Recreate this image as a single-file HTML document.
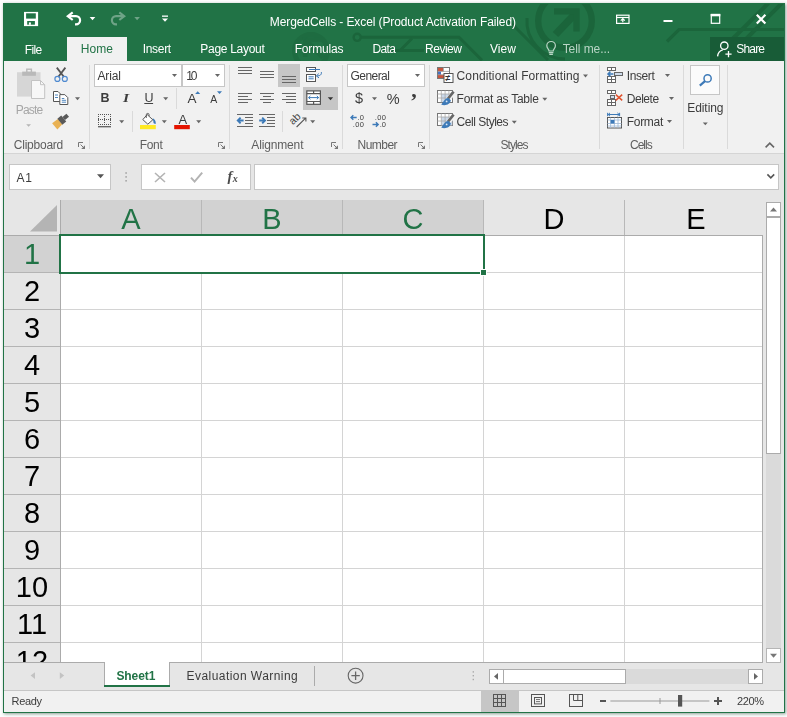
<!DOCTYPE html>
<html><head><meta charset="utf-8"><title>MergedCells - Excel</title>
<style>
html,body{margin:0;padding:0;}
body{width:787px;height:717px;overflow:hidden;background:#fdfdfd;position:relative;font-family:"Liberation Sans",sans-serif;}
#w div{position:absolute;}
#w .t{white-space:nowrap;}
svg{position:absolute;left:0;top:0;}
</style></head><body><div id="w">
<div style="left:3px;top:3px;width:782px;height:710px;background:#e6e6e6;box-shadow:1px 1px 3px rgba(30,70,50,.5);"></div>
<div style="left:3px;top:3px;width:782px;height:58px;background:#217346;"></div>
<svg width="787" height="717" viewBox="0 0 787 717"><defs><clipPath id="tb"><rect x="4" y="4" width="780" height="57"/></clipPath></defs><g clip-path="url(#tb)" fill="none" stroke="#1b653b" stroke-width="3"><circle cx="565" cy="21" r="26.8" stroke-width="6.3"/><path d="M555.5 34.5L575 14" stroke-width="7.5"/><path d="M554 11.4H576.5V31.5" stroke-width="6.3"/><path d="M527 18a38 38 0 0 0 38 41" stroke-width="3"/><path d="M508 20L548 60" stroke-width="3"/><path d="M787 29.5H679L667 41.5" stroke-width="3.2"/><path d="M768.5 3L733 38.5" stroke-width="4"/><path d="M782 3L746.5 38.5" stroke-width="4"/><g stroke="#1e6c41"><circle cx="311" cy="51" r="16.5" stroke-width="5"/><path d="M303 39.5H322M305.2 37.5V57" stroke-width="4.5"/><path d="M305 39.5L323 57.5" stroke-width="5"/></g><path d="M361 37.3H459L482 60.3" stroke-width="3"/><path d="M412 38.5L400 50.5M385 50.5H424" stroke-width="3"/><circle cx="357.2" cy="37.3" r="3.6" stroke-width="2.4"/></g></svg>
<div style="left:67px;top:37px;width:60px;height:24px;background:#f1f1f1;"></div>
<div style="left:710px;top:37px;width:75px;height:24px;background:#185c37;"></div>
<div style="left:4px;top:61px;width:780px;height:92px;background:#f1f1f1;"></div>
<div style="left:4px;top:153px;width:780px;height:1px;background:#d5d5d5;"></div>
<div style="left:89px;top:65px;width:1px;height:84px;background:#dadada;"></div>
<div style="left:229px;top:65px;width:1px;height:84px;background:#dadada;"></div>
<div style="left:342px;top:65px;width:1px;height:84px;background:#dadada;"></div>
<div style="left:429px;top:65px;width:1px;height:84px;background:#dadada;"></div>
<div style="left:599px;top:65px;width:1px;height:84px;background:#dadada;"></div>
<div style="left:683px;top:65px;width:1px;height:84px;background:#dadada;"></div>
<div style="left:727px;top:65px;width:1px;height:84px;background:#dadada;"></div>
<div style="left:176px;top:88px;width:1px;height:21px;background:#dadada;"></div>
<div style="left:132px;top:111px;width:1px;height:21px;background:#dadada;"></div>
<div style="left:282px;top:111px;width:1px;height:21px;background:#dadada;"></div>
<div style="left:94px;top:64px;width:88px;height:23px;background:#fff;border:1px solid #c6c6c6;box-sizing:border-box;"></div>
<div style="left:182px;top:64px;width:43px;height:23px;background:#fff;border:1px solid #c6c6c6;box-sizing:border-box;"></div>
<div style="left:347px;top:64px;width:78px;height:23px;background:#fff;border:1px solid #c6c6c6;box-sizing:border-box;"></div>
<div style="left:278px;top:64px;width:22px;height:23px;background:#c6c6c6;"></div>
<div style="left:303px;top:87px;width:35px;height:23px;background:#c6c6c6;"></div>
<div style="left:690px;top:65px;width:30px;height:30px;background:#fbfbfb;border:1px solid #c6c6c6;box-sizing:border-box;"></div>
<div style="left:9px;top:164px;width:102px;height:26px;background:#fff;border:1px solid #c6c6c6;box-sizing:border-box;"></div>
<div style="left:141px;top:164px;width:110px;height:26px;background:#fff;border:1px solid #c6c6c6;box-sizing:border-box;"></div>
<div style="left:254px;top:164px;width:525px;height:26px;background:#fff;border:1px solid #c6c6c6;box-sizing:border-box;"></div>
<div style="left:61px;top:236px;width:701px;height:426px;background:#fff;"></div>
<div style="left:61px;top:200px;width:423px;height:35px;background:#d2d2d2;"></div>
<div style="left:4px;top:236px;width:56px;height:37px;background:#d2d2d2;"></div>
<div style="left:201px;top:200px;width:1px;height:35px;background:#b8b8b8;"></div>
<div style="left:342px;top:200px;width:1px;height:35px;background:#b8b8b8;"></div>
<div style="left:483px;top:200px;width:1px;height:35px;background:#b8b8b8;"></div>
<div style="left:624px;top:200px;width:1px;height:35px;background:#b8b8b8;"></div>
<div style="left:4px;top:235px;width:759px;height:1px;background:#ababab;"></div>
<div style="left:60px;top:200px;width:1px;height:462px;background:#ababab;"></div>
<div style="left:201px;top:236px;width:1px;height:426px;background:#d4d4d4;"></div>
<div style="left:342px;top:236px;width:1px;height:426px;background:#d4d4d4;"></div>
<div style="left:483px;top:236px;width:1px;height:426px;background:#d4d4d4;"></div>
<div style="left:624px;top:236px;width:1px;height:426px;background:#d4d4d4;"></div>
<div style="left:4px;top:272px;width:56px;height:1px;background:#b4b4b4;"></div>
<div style="left:61px;top:272px;width:701px;height:1px;background:#d4d4d4;"></div>
<div style="left:4px;top:309px;width:56px;height:1px;background:#b4b4b4;"></div>
<div style="left:61px;top:309px;width:701px;height:1px;background:#d4d4d4;"></div>
<div style="left:4px;top:346px;width:56px;height:1px;background:#b4b4b4;"></div>
<div style="left:61px;top:346px;width:701px;height:1px;background:#d4d4d4;"></div>
<div style="left:4px;top:383px;width:56px;height:1px;background:#b4b4b4;"></div>
<div style="left:61px;top:383px;width:701px;height:1px;background:#d4d4d4;"></div>
<div style="left:4px;top:420px;width:56px;height:1px;background:#b4b4b4;"></div>
<div style="left:61px;top:420px;width:701px;height:1px;background:#d4d4d4;"></div>
<div style="left:4px;top:457px;width:56px;height:1px;background:#b4b4b4;"></div>
<div style="left:61px;top:457px;width:701px;height:1px;background:#d4d4d4;"></div>
<div style="left:4px;top:494px;width:56px;height:1px;background:#b4b4b4;"></div>
<div style="left:61px;top:494px;width:701px;height:1px;background:#d4d4d4;"></div>
<div style="left:4px;top:531px;width:56px;height:1px;background:#b4b4b4;"></div>
<div style="left:61px;top:531px;width:701px;height:1px;background:#d4d4d4;"></div>
<div style="left:4px;top:568px;width:56px;height:1px;background:#b4b4b4;"></div>
<div style="left:61px;top:568px;width:701px;height:1px;background:#d4d4d4;"></div>
<div style="left:4px;top:605px;width:56px;height:1px;background:#b4b4b4;"></div>
<div style="left:61px;top:605px;width:701px;height:1px;background:#d4d4d4;"></div>
<div style="left:4px;top:642px;width:56px;height:1px;background:#b4b4b4;"></div>
<div style="left:61px;top:642px;width:701px;height:1px;background:#d4d4d4;"></div>
<div style="left:762px;top:235px;width:1px;height:428px;background:#ababab;"></div>
<div style="left:4px;top:662px;width:759px;height:1px;background:#ababab;"></div>
<div style="left:61px;top:234px;width:423px;height:2px;background:#217346;"></div>
<div style="left:59px;top:236px;width:2px;height:37px;background:#217346;"></div>
<div style="left:59px;top:234px;width:426px;height:40px;border:2px solid #217346;box-sizing:border-box;"></div>
<div style="left:61px;top:236px;width:422px;height:36px;background:#fff;"></div>
<div style="left:480px;top:269px;width:7px;height:7px;background:#fff;"></div>
<div style="left:481px;top:270px;width:5px;height:5px;background:#217346;"></div>
<div style="left:766px;top:202px;width:15px;height:461px;background:#dadada;"></div>
<div style="left:766px;top:202px;width:15px;height:15px;background:#fff;border:1px solid #ababab;box-sizing:border-box;"></div>
<div style="left:766px;top:217px;width:15px;height:237px;background:#fff;border:1px solid #ababab;box-sizing:border-box;"></div>
<div style="left:766px;top:648px;width:15px;height:15px;background:#fff;border:1px solid #b5b5b5;box-sizing:border-box;"></div>
<div style="left:489px;top:669px;width:274px;height:15px;background:#dadada;"></div>
<div style="left:489px;top:669px;width:15px;height:15px;background:#fff;border:1px solid #ababab;box-sizing:border-box;"></div>
<div style="left:503px;top:669px;width:123px;height:15px;background:#fff;border:1px solid #ababab;box-sizing:border-box;"></div>
<div style="left:748px;top:669px;width:15px;height:15px;background:#fff;border:1px solid #ababab;box-sizing:border-box;"></div>
<div style="left:104px;top:662px;width:66px;height:25px;background:#fff;"></div>
<div style="left:104px;top:685px;width:66px;height:2px;background:#217346;"></div>
<div style="left:104px;top:662px;width:1px;height:23px;background:#ababab;"></div>
<div style="left:169px;top:662px;width:1px;height:23px;background:#ababab;"></div>
<div style="left:314px;top:666px;width:1px;height:20px;background:#ababab;"></div>
<div style="left:4px;top:690px;width:780px;height:1px;background:#c6c6c6;"></div>
<div style="left:4px;top:691px;width:780px;height:21px;background:#f1f1f1;"></div>
<div style="left:481px;top:691px;width:38px;height:21px;background:#c6c6c6;"></div>
<div style="left:3px;top:3px;width:782px;height:710px;border:1px solid #217346;box-sizing:border-box;"></div>
<svg width="787" height="717" viewBox="0 0 787 717">
<rect x="24" y="11.9" width="14.1" height="14.2" fill="#fff"/><rect x="26.1" y="13.3" width="9.7" height="5.3" fill="#217346"/><rect x="27.2" y="21" width="7.7" height="3.7" fill="#217346"/><rect x="28.9" y="22.4" width="2" height="2.4" fill="#fff"/>
<g fill="none" stroke="#fff" stroke-width="2.2"><path d="M72.7 12.4L67.8 16.2l4.9 3.8"/><path d="M68.6 16.2H76a4.1 4.1 0 0 1 0 8.2h-1"/></g>
<path d="M89.7 17h5.6l-2.8 3.3z" fill="#fff"/>
<g fill="none" stroke="#6fa387" stroke-width="2.2"><path d="M119.3 12.4l4.9 3.8-4.9 3.8"/><path d="M123.4 16.2H116a4.1 4.1 0 0 0 0 8.2h1"/></g>
<path d="M134.3 17h5.6l-2.8 3.3z" fill="#6fa387"/>
<rect x="162" y="15.5" width="6" height="1.3" fill="#fff"/>
<path d="M162 18.6h6l-3.0 3.2z" fill="#fff"/>
<g fill="none" stroke="#fff" stroke-width="1.2"><rect x="616.6" y="15.2" width="12.4" height="8.2"/><path d="M616.6 17.5h12.4"/><path d="M622.8 22.3v-3.6M620.8 20.6l2-2 2 2"/></g>
<rect x="663.5" y="20" width="9" height="2" fill="#fff"/>
<rect x="711.3" y="14.5" width="8.4" height="8.8" fill="none" stroke="#fff" stroke-width="1.2"/><rect x="710.7" y="13.9" width="9.6" height="2.4" fill="#fff"/>
<path d="M756.8 14.8l8.6 8.8M765.4 14.8l-8.6 8.8" stroke="#fff" stroke-width="2.2" fill="none"/>
<g fill="none" stroke="#b9d5c5" stroke-width="1.2"><path d="M549 51c0-1.8-2.2-2.6-2.2-5.2a4.3 4.3 0 0 1 8.6 0c0 2.6-2.2 3.4-2.2 5.2z"/><path d="M548.8 52.6h4.6M549.3 54.4h3.6"/></g>
<g fill="none" stroke="#fff" stroke-width="1.3"><circle cx="724.3" cy="45.7" r="3.7"/><path d="M717.6 56.4c.3-3.6 2.4-5.9 5.2-6.6"/><path d="M728.5 51v6.2M725.4 54.1h6.2"/></g>
<rect x="17" y="72.2" width="23.5" height="24.4" fill="#d6d6d6"/><rect x="22.2" y="71.6" width="13.7" height="4.2" fill="#b9b9b9"/><rect x="26.8" y="69.2" width="4.6" height="3.4" fill="none" stroke="#b9b9b9" stroke-width="1.4"/><path d="M31.5 80.5h9l4.2 4.2v13.8h-13.2z" fill="#f7f7f7" stroke="#c3c3c3" stroke-width="1"/><path d="M40.5 80.5v4.2h4.2" fill="none" stroke="#c3c3c3" stroke-width="1"/>
<path d="M26.2 124.2h4.8l-2.4 2.6z" fill="#b5b5b5"/>
<g fill="none"><path d="M56.8 67.6L64 77M65.4 67.6L58.2 77" stroke="#555" stroke-width="1.8"/><circle cx="57.4" cy="78.9" r="2.5" stroke="#4f8ad0" stroke-width="1.2"/><circle cx="64.8" cy="78.9" r="2.5" stroke="#4f8ad0" stroke-width="1.2"/></g>
<g fill="#fff" stroke="#555" stroke-width="1"><path d="M53.5 91.5h4.5l2.5 2.5v7.5h-7z"/><path d="M59.8 94.6h5l3 3v6.9h-8z"/></g><path d="M55 95h3M55 97.5h3M61.8 98.5h2.5M61.8 100.3h4.3M61.8 102.2h4.3" stroke="#3d7ab8" stroke-width="0.9" fill="none"/>
<path d="M75 97.2h5l-2.5 3z" fill="#666"/>
<g transform="translate(61.2 120.7) rotate(-40)"><path d="M-1.5 -3.4L-8.6 -3.9V4.3L-1.5 3.4z" fill="#e9b254"/><rect x="-1.7" y="-3.9" width="5" height="7.8" fill="#595959"/><rect x="3.3" y="-2" width="5.2" height="4" fill="#595959"/></g>
<path d="M78.5 147V142.5H83" fill="none" stroke="#777" stroke-width="1"/><path d="M80.6 144.6L84.2 148.2" stroke="#777" stroke-width="1"/><path d="M85 145.2V149H81.2z" fill="#777"/>
<path d="M218.5 147V142.5H223" fill="none" stroke="#777" stroke-width="1"/><path d="M220.6 144.6L224.2 148.2" stroke="#777" stroke-width="1"/><path d="M225 145.2V149H221.2z" fill="#777"/>
<path d="M331.5 147V142.5H336" fill="none" stroke="#777" stroke-width="1"/><path d="M333.6 144.6L337.2 148.2" stroke="#777" stroke-width="1"/><path d="M338 145.2V149H334.2z" fill="#777"/>
<path d="M418.5 147V142.5H423" fill="none" stroke="#777" stroke-width="1"/><path d="M420.6 144.6L424.2 148.2" stroke="#777" stroke-width="1"/><path d="M425 145.2V149H421.2z" fill="#777"/>
<path d="M172 74h5l-2.5 3z" fill="#666"/>
<path d="M215 74h5l-2.5 3z" fill="#666"/>
<rect x="144.3" y="103" width="8.8" height="1" fill="#444"/>
<path d="M163.2 97.2h5l-2.5 3z" fill="#666"/>
<path d="M195.2 94l2.5-2.8 2.5 2.8z" fill="#3d7ab8"/><path d="M217 91.3h5l-2.5 2.8z" fill="#3d7ab8"/>
<g stroke="#555" stroke-width="1" fill="none" stroke-dasharray="1 1"><path d="M98 114.5h13M98 119.5h13M98 124.5h13"/><path d="M98.5 114v11M104.5 114v11M110.5 114v11"/></g><rect x="98" y="126.2" width="13" height="1.1" fill="#444"/>
<path d="M119.2 120.2h5l-2.5 3z" fill="#666"/>
<rect x="140" y="125" width="15.8" height="4.2" fill="#ffe924"/><path d="M147.2 114.6l5.6 5.2-5 4.4-5-4.6z" fill="#fff" stroke="#555" stroke-width="1"/><path d="M146.3 118v-3.2a1.4 1.4 0 0 1 2.8 0v1.2" fill="none" stroke="#555" stroke-width="0.9"/><path d="M152.6 118.2c2 .8 3.4 2.6 3.2 5.6-1.6.4-2.6-.6-2.4-2.2z" fill="#3d7ab8"/>
<path d="M161.8 120.2h5l-2.5 3z" fill="#666"/>
<rect x="174.2" y="125" width="15.6" height="4.2" fill="#e51400"/>
<path d="M196.2 120.2h5l-2.5 3z" fill="#666"/>
<rect x="238" y="67" width="14" height="1" fill="#666"/>
<rect x="238" y="70" width="14" height="1" fill="#666"/>
<rect x="238" y="73" width="14" height="1" fill="#666"/>
<rect x="260" y="71" width="14" height="1" fill="#666"/>
<rect x="260" y="74" width="14" height="1" fill="#666"/>
<rect x="260" y="77" width="14" height="1" fill="#666"/>
<rect x="282" y="76" width="14" height="1" fill="#666"/>
<rect x="282" y="79" width="14" height="1" fill="#666"/>
<rect x="282" y="82" width="14" height="1" fill="#666"/>
<rect x="238" y="93" width="14" height="1" fill="#666"/>
<rect x="238" y="96" width="10" height="1" fill="#666"/>
<rect x="238" y="99" width="14" height="1" fill="#666"/>
<rect x="238" y="102" width="10" height="1" fill="#666"/>
<rect x="260" y="93" width="14" height="1" fill="#666"/>
<rect x="263" y="96" width="8" height="1" fill="#666"/>
<rect x="260" y="99" width="14" height="1" fill="#666"/>
<rect x="263" y="102" width="8" height="1" fill="#666"/>
<rect x="282" y="93" width="14" height="1" fill="#666"/>
<rect x="286" y="96" width="10" height="1" fill="#666"/>
<rect x="282" y="99" width="14" height="1" fill="#666"/>
<rect x="286" y="102" width="10" height="1" fill="#666"/>
<g fill="#fff" stroke="#555" stroke-width="1"><rect x="306.5" y="67.5" width="9" height="4"/><rect x="306.5" y="74.5" width="9" height="7"/></g><path d="M309 69.5h11M308.5 76.8h5.2M308.5 78.8h5.2" fill="none" stroke="#3d7ab8" stroke-width="1"/><path d="M321.3 72c.6 2.6-1.2 4-4.6 3.9M318.8 73.6l-2.4 2.3 2.6 2" fill="none" stroke="#3d7ab8" stroke-width="1"/>
<g fill="#fff" stroke="#555" stroke-width="1.2"><rect x="306.8" y="90.9" width="13.6" height="13.4"/><path d="M306.8 93.7h13.6M306.8 101.5h13.6M313.6 90.9v2.8M313.6 101.5v2.8" fill="none"/></g><path d="M308.6 97.6h10M310.4 95.9l-1.8 1.7 1.8 1.7M316.8 95.9l1.8 1.7-1.8 1.7" fill="none" stroke="#3d7ab8" stroke-width="1"/>
<path d="M327.8 97.2h5.4l-2.7 3z" fill="#333"/>
<rect x="237" y="114" width="16" height="1" fill="#666"/>
<rect x="237" y="126" width="16" height="1" fill="#666"/>
<rect x="245" y="117" width="8" height="1" fill="#666"/>
<rect x="245" y="120" width="8" height="1" fill="#666"/>
<rect x="245" y="123" width="8" height="1" fill="#666"/>
<path d="M243.6 120.5H238.2M240.6 117.7l-2.8 2.8 2.8 2.8" fill="none" stroke="#3d7ab8" stroke-width="1.9"/>
<rect x="259" y="114" width="16" height="1" fill="#666"/>
<rect x="259" y="126" width="16" height="1" fill="#666"/>
<rect x="267" y="117" width="8" height="1" fill="#666"/>
<rect x="267" y="120" width="8" height="1" fill="#666"/>
<rect x="267" y="123" width="8" height="1" fill="#666"/>
<path d="M259.2 120.5H264.6M262.2 117.7l2.8 2.8-2.8 2.8" fill="none" stroke="#3d7ab8" stroke-width="1.9"/>
<text x="0" y="0" transform="translate(293 125.3) rotate(-45)" font-family="Liberation Sans, sans-serif" font-size="10.5" fill="#444">ab</text><path d="M296.6 127l9-8.8M305.9 121.6v-3.6h-3.6" fill="none" stroke="#555" stroke-width="1.1"/>
<path d="M310.2 120.2h5l-2.5 3z" fill="#666"/>
<path d="M415 74h5l-2.5 3z" fill="#666"/>
<path d="M372 97.2h5l-2.5 3z" fill="#666"/>
<path d="M356.7 117.5H351.1M353.3 115.2l-2.3 2.3 2.3 2.3" fill="none" stroke="#3d7ab8" stroke-width="1.4"/>
<path d="M372.5 124.5H378.1M375.9 122.2l2.3 2.3-2.3 2.3" fill="none" stroke="#3d7ab8" stroke-width="1.4"/>
<g><rect x="437.5" y="67.5" width="12" height="11" fill="#fff" stroke="#777" stroke-width="1"/><rect x="438" y="68" width="5" height="3.4" fill="#c8553d"/><rect x="438" y="71.4" width="3" height="3.4" fill="#4472c4"/><rect x="438" y="74.8" width="6" height="3.2" fill="#c8553d"/><path d="M443.5 67.5v4M437.5 71.4h12M437.5 74.8h7" stroke="#999" stroke-width="0.8" fill="none"/><rect x="444" y="73.5" width="9" height="9" fill="#fff" stroke="#555" stroke-width="1"/><text x="445.3" y="81.2" font-family="Liberation Sans, sans-serif" font-size="9" font-weight="bold" fill="#333">≠</text></g>
<g><rect x="437.5" y="90.5" width="15" height="12" fill="#fff" stroke="#777" stroke-width="1"/><rect x="441.3" y="94" width="7.6" height="8" fill="#c9d8ea"/><path d="M437.5 94h15M437.5 98h15M441.3 90.5v12M445.1 90.5v12M448.9 90.5v12" stroke="#a8a8a8" stroke-width="0.8" fill="none"/><path d="M454.2 92.4l-6.6 7.4" stroke="#f1f1f1" stroke-width="4.6" fill="none"/><path d="M453.6 91.6l-5.6 7" stroke="#666" stroke-width="2.6" fill="none"/><path d="M448.8 98.2c-3.4-.8-4.4 2.6-7.6 6.4 4.4 1.6 9.2-.4 9.6-4.4z" fill="#3d7ab8"/><circle cx="446.6" cy="101.4" r="0.9" fill="#dce8f5"/></g>
<g><rect x="437.5" y="113.5" width="15" height="12" fill="#fff" stroke="#777" stroke-width="1"/><rect x="441.3" y="117" width="11" height="8.4" fill="#c9d8ea"/><path d="M437.5 117h15M437.5 121h15M441.3 113.5v12M445.1 113.5v12M448.9 113.5v12" stroke="#a8a8a8" stroke-width="0.8" fill="none"/><path d="M454.2 115.4l-6.6 7.4" stroke="#f1f1f1" stroke-width="4.6" fill="none"/><path d="M453.6 114.6l-5.6 7" stroke="#666" stroke-width="2.6" fill="none"/><path d="M448.8 121.2c-3.4-.8-4.4 2.6-7.6 6.4 4.4 1.6 9.2-.4 9.6-4.4z" fill="#3d7ab8"/><circle cx="446.6" cy="124.4" r="0.9" fill="#dce8f5"/></g>
<path d="M583 74.6h5l-2.5 3z" fill="#666"/>
<path d="M542.3 97.8h5l-2.5 3z" fill="#666"/>
<path d="M511.8 120.8h5l-2.5 3z" fill="#666"/>
<g fill="#fff" stroke="#666" stroke-width="1"><rect x="607.5" y="67.5" width="8" height="3"/><path d="M611.5 67.5v3" fill="none"/><rect x="614.5" y="72.5" width="8" height="3" fill="#cfdcec"/><rect x="607.5" y="76.5" width="8" height="6"/><path d="M611.5 76.5v6M607.5 79.5h8" fill="none"/></g><path d="M613.4 74H608M610.4 71.6l-2.4 2.4 2.4 2.4" fill="none" stroke="#3d7ab8" stroke-width="1.5"/>
<g fill="#fff" stroke="#666" stroke-width="1"><rect x="607.5" y="90.5" width="8" height="3"/><path d="M611.5 90.5v3" fill="none"/><rect x="610.5" y="95.5" width="4" height="3" fill="#cfdcec"/><rect x="607.5" y="99.5" width="8" height="6"/><path d="M611.5 99.5v6M607.5 102.5h8" fill="none"/></g><path d="M615.8 94.6l6.4 5.8M622.2 94.6l-6.4 5.8" fill="none" stroke="#e0532f" stroke-width="1.5"/>
<path d="M608 114.5h11.6M607.6 112.8v3.4M619.6 112.8v3.4M610 112.9l-1.8 1.6 1.8 1.6M617.4 112.9l1.8 1.6-1.8 1.6" fill="none" stroke="#3d7ab8" stroke-width="1"/><rect x="607.5" y="117.5" width="14" height="10.5" fill="#fff" stroke="#555" stroke-width="1"/><path d="M607.5 120h14M607.5 123.5h14M607.5 126h14M610.6 117.5v10.5M614.4 117.5v10.5M618 117.5v10.5" stroke="#9db7d6" stroke-width="0.8" fill="none"/><rect x="610.6" y="120" width="3.8" height="3.5" fill="#3d7ab8"/>
<path d="M665 74h5l-2.5 3z" fill="#666"/>
<path d="M669 97h5l-2.5 3z" fill="#666"/>
<path d="M667 120h5l-2.5 3z" fill="#666"/>
<circle cx="707.6" cy="78.4" r="3.6" fill="none" stroke="#3d7ab8" stroke-width="1.5"/><path d="M705 81.2l-5.2 4.4" stroke="#3d7ab8" stroke-width="2.2" fill="none"/>
<path d="M702.8 122.4h5l-2.5 2.8z" fill="#666"/>
<path d="M765.6 147.4l4.2-4.2 4.2 4.2" fill="none" stroke="#666" stroke-width="1.6"/>
<path d="M97 174.2h7l-3.5 4z" fill="#555"/>
<g fill="#a6a6a6"><rect x="125.3" y="172.2" width="1.6" height="1.6"/><rect x="125.3" y="176.1" width="1.6" height="1.6"/><rect x="125.3" y="180" width="1.6" height="1.6"/></g>
<path d="M155 173l10 9M165 173l-10 9" stroke="#b3b3b3" stroke-width="1.6" fill="none"/>
<path d="M191 177.6l3.6 4 7.6-9" stroke="#b3b3b3" stroke-width="2" fill="none"/>
<path d="M767.4 174.4l3.4 3.4 3.4-3.4" stroke="#555" stroke-width="1.6" fill="none"/>
<path d="M57 205v26.5H30z" fill="#b4b4b4"/>
<path d="M770 211.4l3.5-4 3.5 4z" fill="#777"/>
<path d="M770 653.8h7l-3.5 4z" fill="#777"/>
<path d="M498 673l-4 3.4 4 3.4z" fill="#666"/>
<path d="M754 673l4 3.4-4 3.4z" fill="#666"/>
<g fill="#aaa"><rect x="472.6" y="671.2" width="1.4" height="1.4"/><rect x="472.6" y="675" width="1.4" height="1.4"/><rect x="472.6" y="678.8" width="1.4" height="1.4"/></g>
<path d="M35 672.2l-4.4 3.4 4.4 3.4z" fill="#c3c3c3"/><path d="M59.8 672.2l4.4 3.4-4.4 3.4z" fill="#c3c3c3"/>
<circle cx="355.6" cy="675.7" r="7.4" fill="none" stroke="#666" stroke-width="1.1"/><path d="M351.4 675.7h8.4M355.6 671.5v8.4" stroke="#666" stroke-width="1.3" fill="none"/>
<g fill="none" stroke="#555" stroke-width="1"><rect x="493.5" y="694.5" width="12" height="12"/><path d="M497.5 694.5v12M501.5 694.5v12M493.5 698.5h12M493.5 702.5h12"/></g>
<g fill="none" stroke="#555" stroke-width="1"><rect x="531.5" y="694.5" width="13" height="12"/><rect x="534.5" y="697.5" width="7" height="6.4"/><path d="M536 699.5h4M536 701.6h4" stroke-width="0.8"/></g>
<g fill="none" stroke="#555" stroke-width="1"><rect x="569.5" y="694.5" width="13" height="12"/><path d="M573.5 694.5v6h9M577.8 694.5v6"/></g>
<rect x="600" y="700" width="6" height="2" fill="#555"/><rect x="610.4" y="700.5" width="99" height="1" fill="#9a9a9a"/><rect x="659.5" y="698" width="1" height="6" fill="#9a9a9a"/><rect x="678" y="695" width="4.2" height="11.6" fill="#555"/><path d="M714 701h8M718 697v8" stroke="#555" stroke-width="2" fill="none"/>
</svg>
<div id="tx" style="left:0;top:0;width:787px;height:717px;will-change:transform;">
<div class="t" style="left:269.80px;top:15px;font-size:12px;line-height:14px;color:#fff;letter-spacing:-0.099px;">MergedCells - Excel (Product Activation Failed)</div>
<div class="t" style="left:24.80px;top:43px;font-size:12px;line-height:14px;color:#fff;letter-spacing:-0.692px;">File</div>
<div class="t" style="left:80.80px;top:42px;font-size:12px;line-height:14px;color:#217346;letter-spacing:0.067px;">Home</div>
<div class="t" style="left:142.70px;top:42px;font-size:12px;line-height:14px;color:#fff;letter-spacing:-0.300px;">Insert</div>
<div class="t" style="left:200.30px;top:42px;font-size:12px;line-height:14px;color:#fff;letter-spacing:-0.287px;">Page Layout</div>
<div class="t" style="left:294.70px;top:42px;font-size:12px;line-height:14px;color:#fff;letter-spacing:-0.186px;">Formulas</div>
<div class="t" style="left:372.50px;top:42px;font-size:12px;line-height:14px;color:#fff;letter-spacing:-0.658px;">Data</div>
<div class="t" style="left:425.00px;top:42px;font-size:12px;line-height:14px;color:#fff;letter-spacing:-0.475px;">Review</div>
<div class="t" style="left:490.00px;top:42px;font-size:12px;line-height:14px;color:#fff;letter-spacing:0.042px;">View</div>
<div class="t" style="left:562.70px;top:42px;font-size:12px;line-height:14px;color:#b9d5c5;letter-spacing:-0.078px;">Tell me...</div>
<div class="t" style="left:736.30px;top:42px;font-size:12px;line-height:14px;color:#fff;letter-spacing:-0.825px;">Share</div>
<div class="t" style="left:13.80px;top:138px;font-size:12px;line-height:14px;color:#5e5e5e;letter-spacing:-0.234px;">Clipboard</div>
<div class="t" style="left:139.70px;top:138px;font-size:12px;line-height:14px;color:#5e5e5e;letter-spacing:-0.300px;">Font</div>
<div class="t" style="left:251.30px;top:138px;font-size:12px;line-height:14px;color:#5e5e5e;letter-spacing:-0.147px;">Alignment</div>
<div class="t" style="left:357.50px;top:138px;font-size:12px;line-height:14px;color:#5e5e5e;letter-spacing:-0.525px;">Number</div>
<div class="t" style="left:500.50px;top:138px;font-size:12px;line-height:14px;color:#5e5e5e;letter-spacing:-0.945px;">Styles</div>
<div class="t" style="left:629.90px;top:138px;font-size:12px;line-height:14px;color:#5e5e5e;letter-spacing:-0.931px;">Cells</div>
<div class="t" style="left:15.80px;top:103px;font-size:12px;line-height:14px;color:#a6a6a6;letter-spacing:-0.806px;">Paste</div>
<div class="t" style="left:97.40px;top:69px;font-size:12px;line-height:14px;color:#3c3c3c;letter-spacing:-0.125px;">Arial</div>
<div class="t" style="left:186.20px;top:69px;font-size:12px;line-height:14px;color:#3c3c3c;letter-spacing:-2.175px;">10</div>
<div class="t" style="left:350.60px;top:69px;font-size:12px;line-height:14px;color:#3c3c3c;letter-spacing:-0.575px;">General</div>
<div class="t" style="left:100.60px;top:91px;font-size:12.5px;line-height:14px;color:#3c3c3c;font-weight:bold;">B</div>
<div class="t" style="left:123.45px;top:90px;font-size:13px;line-height:15px;color:#3c3c3c;font-weight:bold;font-style:italic;font-family:'Liberation Serif',serif;transform:scaleX(1.2);transform-origin:0 0;">I</div>
<div class="t" style="left:144.60px;top:91px;font-size:12.5px;line-height:14px;color:#3c3c3c;">U</div>
<div class="t" style="left:187.60px;top:91px;font-size:13.5px;line-height:15px;color:#3c3c3c;">A</div>
<div class="t" style="left:210.30px;top:93px;font-size:10.5px;line-height:12px;color:#3c3c3c;">A</div>
<div class="t" style="left:178.40px;top:112px;font-size:13px;line-height:15px;color:#3c3c3c;">A</div>
<div class="t" style="left:354.90px;top:90px;font-size:14.5px;line-height:16px;color:#3c3c3c;">$</div>
<div class="t" style="left:386.70px;top:91px;font-size:14.5px;line-height:16px;color:#3c3c3c;">%</div>
<div class="t" style="left:411.20px;top:77px;font-size:22px;line-height:25px;color:#3c3c3c;font-weight:bold;font-family:'Liberation Serif',serif;">,</div>
<div class="t" style="left:357.40px;top:113px;font-size:7.5px;line-height:9px;color:#3c3c3c;letter-spacing:0.350px;">.0</div>
<div class="t" style="left:352.70px;top:120px;font-size:7.5px;line-height:9px;color:#3c3c3c;letter-spacing:0.463px;">.00</div>
<div class="t" style="left:374.80px;top:113px;font-size:7.5px;line-height:9px;color:#3c3c3c;letter-spacing:0.362px;">.00</div>
<div class="t" style="left:379.80px;top:120px;font-size:7.5px;line-height:9px;color:#3c3c3c;letter-spacing:-0.150px;">.0</div>
<div class="t" style="left:456.60px;top:69px;font-size:12px;line-height:14px;color:#3c3c3c;letter-spacing:0.098px;">Conditional Formatting</div>
<div class="t" style="left:456.60px;top:92px;font-size:12px;line-height:14px;color:#3c3c3c;letter-spacing:-0.255px;">Format as Table</div>
<div class="t" style="left:456.60px;top:115px;font-size:12px;line-height:14px;color:#3c3c3c;letter-spacing:-0.473px;">Cell Styles</div>
<div class="t" style="left:626.70px;top:69px;font-size:12px;line-height:14px;color:#3c3c3c;letter-spacing:-0.380px;">Insert</div>
<div class="t" style="left:626.70px;top:92px;font-size:12px;line-height:14px;color:#3c3c3c;letter-spacing:-0.450px;">Delete</div>
<div class="t" style="left:626.70px;top:115px;font-size:12px;line-height:14px;color:#3c3c3c;letter-spacing:-0.280px;">Format</div>
<div class="t" style="left:687.20px;top:101px;font-size:12px;line-height:14px;color:#3c3c3c;letter-spacing:-0.058px;">Editing</div>
<div class="t" style="left:16.50px;top:171px;font-size:12px;line-height:14px;color:#3c3c3c;letter-spacing:0.675px;">A1</div>
<div class="t" style="left:227.60px;top:168px;font-size:14.5px;line-height:16px;color:#4a4a4a;font-weight:bold;font-style:italic;font-family:'Liberation Serif',serif;">f</div>
<div class="t" style="left:232.72px;top:173px;font-size:10px;line-height:11px;color:#4a4a4a;font-weight:bold;font-style:italic;font-family:'Liberation Serif',serif;">x</div>
<div class="t" style="left:61px;top:203px;width:140px;text-align:center;font-size:29px;line-height:32px;color:#217346;">A</div>
<div class="t" style="left:202px;top:203px;width:140px;text-align:center;font-size:29px;line-height:32px;color:#217346;">B</div>
<div class="t" style="left:343px;top:203px;width:140px;text-align:center;font-size:29px;line-height:32px;color:#217346;">C</div>
<div class="t" style="left:484px;top:203px;width:140px;text-align:center;font-size:29px;line-height:32px;color:#000;">D</div>
<div class="t" style="left:625px;top:203px;width:142px;text-align:center;font-size:29px;line-height:32px;color:#000;">E</div>
<div class="t" style="left:4px;top:238px;width:56px;text-align:center;font-size:29px;line-height:32px;color:#217346;">1</div>
<div class="t" style="left:4px;top:275px;width:56px;text-align:center;font-size:29px;line-height:32px;color:#000;">2</div>
<div class="t" style="left:4px;top:312px;width:56px;text-align:center;font-size:29px;line-height:32px;color:#000;">3</div>
<div class="t" style="left:4px;top:349px;width:56px;text-align:center;font-size:29px;line-height:32px;color:#000;">4</div>
<div class="t" style="left:4px;top:386px;width:56px;text-align:center;font-size:29px;line-height:32px;color:#000;">5</div>
<div class="t" style="left:4px;top:423px;width:56px;text-align:center;font-size:29px;line-height:32px;color:#000;">6</div>
<div class="t" style="left:4px;top:460px;width:56px;text-align:center;font-size:29px;line-height:32px;color:#000;">7</div>
<div class="t" style="left:4px;top:497px;width:56px;text-align:center;font-size:29px;line-height:32px;color:#000;">8</div>
<div class="t" style="left:4px;top:534px;width:56px;text-align:center;font-size:29px;line-height:32px;color:#000;">9</div>
<div class="t" style="left:4px;top:571px;width:56px;text-align:center;font-size:29px;line-height:32px;color:#000;">10</div>
<div class="t" style="left:4px;top:608px;width:56px;text-align:center;font-size:29px;line-height:32px;color:#000;">11</div>
<div style="left:4px;top:643px;width:56px;height:19px;overflow:hidden;"><div class="t" style="left:0;top:2px;width:56px;text-align:center;font-size:29px;line-height:32px;color:#000;">12</div></div>
<div class="t" style="left:116.40px;top:669px;font-size:12px;line-height:14px;color:#217346;letter-spacing:-0.055px;font-weight:bold;">Sheet1</div>
<div class="t" style="left:186.50px;top:669px;font-size:12px;line-height:14px;color:#3c3c3c;letter-spacing:0.451px;">Evaluation Warning</div>
<div class="t" style="left:11.60px;top:695px;font-size:11px;line-height:12px;color:#3c3c3c;letter-spacing:-0.362px;">Ready</div>
<div class="t" style="left:737.00px;top:695px;font-size:11px;line-height:12px;color:#3c3c3c;letter-spacing:-0.375px;">220%</div>
</div>
</div></body></html>
